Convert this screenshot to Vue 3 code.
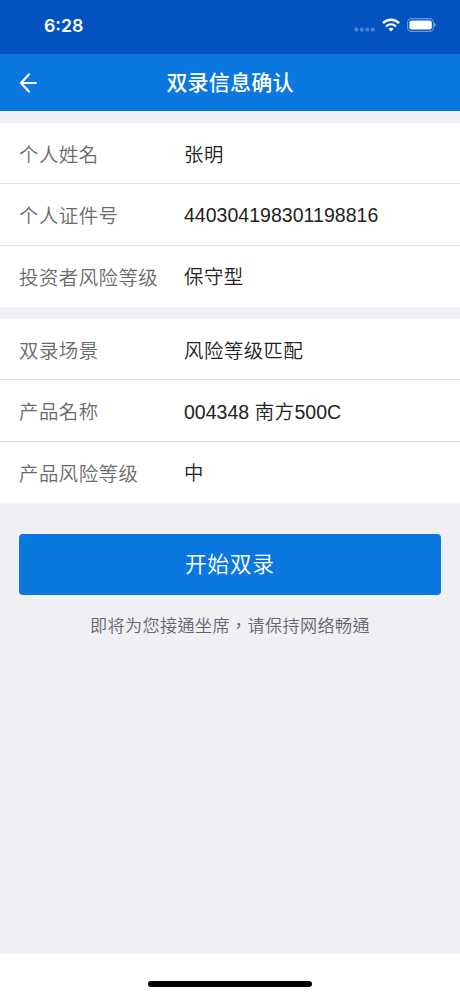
<script setup>
const groups = [
  [
    { label: '个人姓名', value: [{ text: '张明', cjk: true }] },
    { label: '个人证件号', value: [{ text: '440304198301198816' }] },
    { label: '投资者风险等级', value: [{ text: '保守型', cjk: true }] },
  ],
  [
    { label: '双录场景', value: [{ text: '风险等级匹配', cjk: true }] },
    { label: '产品名称', value: [{ text: '004348 ' }, { text: '南方', cjk: true }, { text: '500C' }] },
    { label: '产品风险等级', value: [{ text: '中', cjk: true }] },
  ],
]
</script>

<template>
  <div class="screen">
    <div class="status">
      <span class="time">6:28</span>
      <div class="indicators">
        <svg class="signal" width="22" height="5" viewBox="0 0 22 5" fill="#fff" fill-opacity=".27">
          <rect x="0.3" y="0.5" width="4" height="4" rx="1.6" />
          <rect x="5.8" y="0.5" width="4" height="4" rx="1.6" />
          <rect x="11.3" y="0.5" width="4" height="4" rx="1.6" />
          <rect x="16.8" y="0.5" width="4" height="4" rx="1.6" />
        </svg>
        <svg class="wifi" width="18" height="14" viewBox="0 0 18 14" fill="none" stroke="#fff" stroke-width="2.4">
          <path d="M.9 5.2C5.5.6 12.5.6 17.1 5.2" />
          <path d="M4 8.5c2.9-2.8 7.1-2.8 10 0" />
          <path d="M6.4 10.7c1.5-1.3 3.7-1.3 5.2 0L9 13.4z" fill="#fff" stroke="none" />
        </svg>
        <svg class="battery" width="30" height="14" viewBox="0 0 30 14">
          <rect x="0.6" y="0.6" width="25.8" height="12.8" rx="3.8" fill="none" stroke="#fff" stroke-opacity=".4" stroke-width="1.1" />
          <rect x="2.4" y="2.4" width="22.4" height="9.2" rx="2.3" fill="#fff" />
          <path d="M27.2 4.8c2 .7 2 3.7 0 4.4z" fill="#fff" fill-opacity=".5" />
        </svg>
      </div>
    </div>
    <header class="nav">
      <svg class="back" width="18" height="20" viewBox="0 0 18 20" fill="none" stroke="#fff" stroke-width="2.2" stroke-linecap="round" stroke-linejoin="round">
        <path d="M9.9 1.4 2 10l7.9 8.6M2 10H16.8" />
      </svg>
      <h1>双录信息确认</h1>
    </header>
    <main class="content">
      <section v-for="(rows, i) in groups" :key="i" class="group">
        <div v-for="row in rows" :key="row.label" class="row">
          <span class="label">{{ row.label }}</span>
          <span class="value"><span v-for="part in row.value" :key="part.text" :class="{ cjk: part.cjk }">{{ part.text }}</span></span>
        </div>
      </section>
      <button class="start" type="button">开始双录</button>
      <p class="note">即将为您接通坐席，请保持网络畅通</p>
    </main>
    <footer class="home"><span class="bar"></span></footer>
  </div>
</template>

<style>
body {
  margin: 0;
  background: #fff;
}
</style>

<style scoped>
.screen {
  display: flex;
  flex-direction: column;
  width: 460px;
  height: 996px;
  overflow: hidden;
  background: #efeff4;
  font-family: "Liberation Sans", "Noto Sans CJK TC", sans-serif;
}
.status {
  display: flex;
  flex: none;
  justify-content: space-between;
  box-sizing: border-box;
  height: 54px;
  padding: 14px 23px 0 44px;
  background: #0253c0;
}
.time {
  color: #fff;
  font: 600 17.8px/23px Inter, sans-serif;
}
.indicators {
  display: flex;
  align-items: flex-start;
  padding-top: 4px;
}
.signal {
  margin: 9px 6px 0 0;
}
.wifi {
  margin-right: 7px;
}
.nav {
  display: grid;
  flex: none;
  grid-template-columns: 60px 1fr 60px;
  align-items: center;
  height: 56.5px;
  background: #0b78e0;
}
.back {
  margin: 1px 0 0 19px;
}
h1 {
  margin: 0;
  padding-bottom: 3px;
  color: #fff;
  font: 500 21px/30px "Noto Sans CJK TC", sans-serif;
  letter-spacing: 0.2px;
  text-align: center;
}
.content {
  flex: 1;
}
.group {
  margin-top: 12px;
  background: #fff;
}
.group:first-child {
  margin-top: 12.5px;
}
.row {
  display: flex;
  align-items: center;
  box-sizing: border-box;
  height: 61.33px;
  padding: 2px 0 0 19px;
  border-bottom: 1px solid #e3e3e5;
  font-size: 19.4px;
  line-height: 28px;
}
.row:last-child {
  padding-top: 1px;
  border-bottom: 0;
}
.label {
  width: 165px;
  color: #6a6a6a;
  font-family: "Noto Sans CJK TC", sans-serif;
  font-weight: 350;
  letter-spacing: 0.5px;
}
.value {
  color: #222;
  font-size: 19.5px;
  letter-spacing: 0.03px;
  white-space: pre;
}
.cjk {
  font-family: "Noto Sans CJK TC", sans-serif;
  font-size: 19.4px;
  font-weight: 350;
  letter-spacing: 0.5px;
}
.start {
  display: block;
  width: 422.5px;
  height: 61px;
  margin: 31px 0 0 18.5px;
  padding: 0 0 2px;
  border: 0;
  border-radius: 4px;
  background: #0b78e0;
  color: #fff;
  font: 350 21.8px/30px "Noto Sans CJK TC", sans-serif;
  letter-spacing: 0.6px;
}
.note {
  margin: 17px 0 0;
  color: #666;
  font: 350 17.1px/26px "Noto Sans CJK TC", sans-serif;
  letter-spacing: 0.4px;
  text-align: center;
}
.home {
  display: flex;
  flex: none;
  justify-content: center;
  height: 42px;
  background: #fff;
}
.bar {
  width: 164px;
  height: 6px;
  margin-top: 27px;
  border-radius: 3px;
  background: #000;
}
</style>
